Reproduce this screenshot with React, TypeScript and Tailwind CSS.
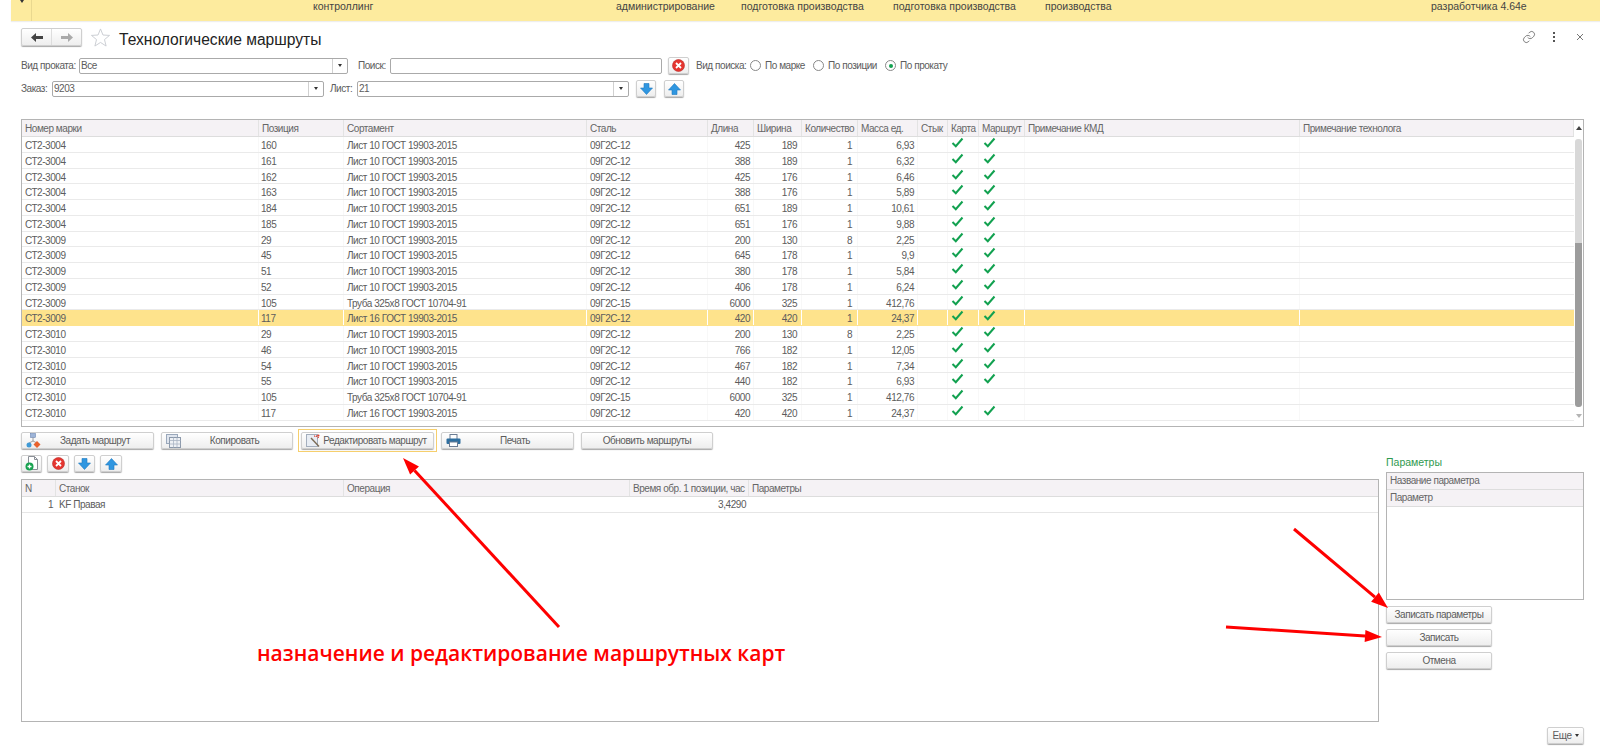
import type { ReactNode } from "react";

type Row = {
  mark: string;
  pos: string;
  item: string;
  steel: string;
  len: string;
  width: string;
  qty: string;
  mass: string;
  route?: boolean;
  selected?: boolean;
};

const SHEET10 = "Лист 10 ГОСТ 19903-2015";
const SHEET16 = "Лист 16 ГОСТ 19903-2015";
const PIPE = "Труба 325x8 ГОСТ 10704-91";

const rows: Row[] = [
  { mark: "СТ2-3004", pos: "160", item: SHEET10, steel: "09Г2С-12", len: "425", width: "189", qty: "1", mass: "6,93", route: true },
  { mark: "СТ2-3004", pos: "161", item: SHEET10, steel: "09Г2С-12", len: "388", width: "189", qty: "1", mass: "6,32", route: true },
  { mark: "СТ2-3004", pos: "162", item: SHEET10, steel: "09Г2С-12", len: "425", width: "176", qty: "1", mass: "6,46", route: true },
  { mark: "СТ2-3004", pos: "163", item: SHEET10, steel: "09Г2С-12", len: "388", width: "176", qty: "1", mass: "5,89", route: true },
  { mark: "СТ2-3004", pos: "184", item: SHEET10, steel: "09Г2С-12", len: "651", width: "189", qty: "1", mass: "10,61", route: true },
  { mark: "СТ2-3004", pos: "185", item: SHEET10, steel: "09Г2С-12", len: "651", width: "176", qty: "1", mass: "9,88", route: true },
  { mark: "СТ2-3009", pos: "29", item: SHEET10, steel: "09Г2С-12", len: "200", width: "130", qty: "8", mass: "2,25", route: true },
  { mark: "СТ2-3009", pos: "45", item: SHEET10, steel: "09Г2С-12", len: "645", width: "178", qty: "1", mass: "9,9", route: true },
  { mark: "СТ2-3009", pos: "51", item: SHEET10, steel: "09Г2С-12", len: "380", width: "178", qty: "1", mass: "5,84", route: true },
  { mark: "СТ2-3009", pos: "52", item: SHEET10, steel: "09Г2С-12", len: "406", width: "178", qty: "1", mass: "6,24", route: true },
  { mark: "СТ2-3009", pos: "105", item: PIPE, steel: "09Г2С-15", len: "6000", width: "325", qty: "1", mass: "412,76", route: true },
  { mark: "СТ2-3009", pos: "117", item: SHEET16, steel: "09Г2С-12", len: "420", width: "420", qty: "1", mass: "24,37", route: true, selected: true },
  { mark: "СТ2-3010", pos: "29", item: SHEET10, steel: "09Г2С-12", len: "200", width: "130", qty: "8", mass: "2,25", route: true },
  { mark: "СТ2-3010", pos: "46", item: SHEET10, steel: "09Г2С-12", len: "766", width: "182", qty: "1", mass: "12,05", route: true },
  { mark: "СТ2-3010", pos: "54", item: SHEET10, steel: "09Г2С-12", len: "467", width: "182", qty: "1", mass: "7,34", route: true },
  { mark: "СТ2-3010", pos: "55", item: SHEET10, steel: "09Г2С-12", len: "440", width: "182", qty: "1", mass: "6,93", route: true },
  { mark: "СТ2-3010", pos: "105", item: PIPE, steel: "09Г2С-15", len: "6000", width: "325", qty: "1", mass: "412,76" },
  { mark: "СТ2-3010", pos: "117", item: SHEET16, steel: "09Г2С-12", len: "420", width: "420", qty: "1", mass: "24,37", route: true },
];

const GRID = "grid grid-cols-[237px_85px_243px_121px_46px_48px_56px_60px_30px_31px_46px_275px_274px]";
const HEADERS = ["Номер марки", "Позиция", "Сортамент", "Сталь", "Длина", "Ширина", "Количество", "Масса ед.", "Стык", "Карта", "Маршрут", "Примечание КМД", "Примечание технолога"];
const BTN = "bg-gradient-to-b from-white to-[#eeeeee] border border-[#cfcfcf] rounded-[2px] shadow-[0_1px_1px_#a8a8a8]";

function Check() {
  return (
    <svg width="13" height="11" viewBox="0 0 13 11" className="block">
      <path d="M1.5 6 L4.8 9.2 L11.5 1.5" fill="none" stroke="#12a150" strokeWidth="2" />
    </svg>
  );
}

function TableRow({ r }: { r: Row }) {
  const cell = r.selected ? "border-r border-white" : "border-r border-[#f8f8f8]";
  return (
    <div className={`${GRID} grid-rows-[14.75px] h-[15.75px] leading-[18px] border-b ${r.selected ? "bg-[#fee38c] border-[#fee38c]" : "border-[#eaeaea]"}`}>
      <div className={`pl-[3px] ${cell}`}>{r.mark}</div>
      <div className={`pl-[2px] ${cell}`}>{r.pos}</div>
      <div className={`pl-[3px] ${cell}`}>{r.item}</div>
      <div className={`pl-[3px] ${cell}`}>{r.steel}</div>
      <div className={`pr-[3px] text-right ${cell}`}>{r.len}</div>
      <div className={`pr-[4px] text-right ${cell}`}>{r.width}</div>
      <div className={`pr-[5px] text-right ${cell}`}>{r.qty}</div>
      <div className={`pr-[3px] text-right ${cell}`}>{r.mass}</div>
      <div className={cell} />
      <div className={`pl-[3px] ${cell}`}><Check /></div>
      <div className={`pl-[4px] ${cell}`}>{r.route && <Check />}</div>
      <div className={cell} />
      <div />
    </div>
  );
}

function HeaderCell({ children, className = "" }: { children?: ReactNode; className?: string }) {
  return <div className={`pl-[3px] border-r border-[#e3e3e3] whitespace-nowrap overflow-hidden ${className}`}>{children}</div>;
}

function ArrowBlue({ up }: { up?: boolean }) {
  return (
    <svg width="13" height="12" viewBox="0 0 13 12" className={up ? "rotate-180" : ""}>
      <path d="M4 .5 H9 V5 H12.5 L6.5 11.5 L.5 5 H4 Z" fill="#2f96e0" stroke="#1f78c0" strokeWidth=".6" />
    </svg>
  );
}

function Clear() {
  return (
    <svg width="13" height="13" viewBox="0 0 13 13">
      <circle cx="6.5" cy="6.5" r="6" fill="#e5352f" stroke="#b82a26" strokeWidth=".6" />
      <path d="M4 4 L9 9 M9 4 L4 9" stroke="#fff" strokeWidth="1.8" />
    </svg>
  );
}

function IconButton({ children, className = "" }: { children: ReactNode; className?: string }) {
  return <div className={`${BTN} flex items-center justify-center h-[17px] ${className}`}>{children}</div>;
}

function Combo({ value, className }: { value: string; className: string }) {
  return (
    <div className={`flex h-[16px] border border-[#aaaaaa] rounded-[2px] bg-white leading-[14px] ${className}`}>
      <div className="flex-1 pl-[1px]">{value}</div>
      <div className="w-[15px] border-l border-[#d0d0d0] flex items-center justify-center">
        <div className="w-0 h-0 border-l-[2px] border-r-[2px] border-t-[3px] border-l-transparent border-r-transparent border-t-[#333]" />
      </div>
    </div>
  );
}

function Radio({ label, on, className = "" }: { label: string; on?: boolean; className?: string }) {
  return (
    <div className={`flex items-center gap-[4px] whitespace-nowrap ${className}`}>
      <div className="w-[11px] h-[11px] rounded-full border border-[#888] bg-white flex items-center justify-center">
        {on && <div className="w-[4px] h-[4px] rounded-full bg-[#12a150]" />}
      </div>
      <span>{label}</span>
    </div>
  );
}

function ActionButton({ icon, label, className = "" }: { icon?: ReactNode; label: string; className?: string }) {
  return (
    <div className={`${BTN} flex items-center h-[17px] pl-[4px] whitespace-nowrap ${className}`}>
      {icon}
      <span className="flex-1 text-center pr-[4px]">{label}</span>
    </div>
  );
}

function RouteIcon() {
  return (
    <svg width="15" height="15" viewBox="0 0 15 15">
      <rect x="4.5" y="0.5" width="5" height="4" fill="#9db4d8" stroke="#5a78a8" strokeWidth=".5" />
      <path d="M7 4.5 V8 M3 10 L7 8 L11 10" stroke="#888" strokeWidth=".8" fill="none" />
      <circle cx="3" cy="12" r="2.5" fill="#3f9ad6" />
      <path d="M11 8 L14.5 11.5 L11 15 L7.5 11.5 Z" fill="#e8622c" />
    </svg>
  );
}

function CopyIcon() {
  return (
    <svg width="15" height="14" viewBox="0 0 15 14">
      <rect x="0.5" y="0.5" width="11" height="9" fill="#dfe5ee" stroke="#9aa8bb" />
      <rect x="3.5" y="3.5" width="11" height="10" fill="#eef1f5" stroke="#8c99ab" />
      <path d="M3.5 6.5 H14.5 M3.5 10 H14.5 M7.5 3.5 V13.5 M11 3.5 V13.5" stroke="#a9b5c4" strokeWidth=".8" />
    </svg>
  );
}

function EditIcon() {
  return (
    <svg width="15" height="14" viewBox="0 0 15 14">
      <rect x="0.5" y="0.5" width="11" height="12" fill="#e8edf4" stroke="#a3aebd" />
      <path d="M5 4 L13 12.5" stroke="#7a6a55" strokeWidth="1.4" />
      <path d="M11 1 L10.5 3 M13 3 L11.5 4 M8.5 1.5 L9 3" stroke="#e03a2a" strokeWidth="1" />
      <circle cx="12.5" cy="1.5" r="1" fill="#e03a2a" />
    </svg>
  );
}

function PrintIcon() {
  return (
    <svg width="15" height="13" viewBox="0 0 15 13">
      <rect x="4" y="0.5" width="7" height="5" fill="#fff" stroke="#6b7c93" />
      <rect x="0.5" y="4.5" width="14" height="5.5" rx="1" fill="#2f6f9f" />
      <rect x="3.5" y="8" width="8" height="4.5" fill="#fff" stroke="#6b7c93" />
    </svg>
  );
}

function AddDocIcon() {
  return (
    <svg width="14" height="15" viewBox="0 0 14 15">
      <path d="M3.5 .5 H9.5 L12.5 3.5 V13.5 H3.5 Z" fill="#fff" stroke="#8a8f96" />
      <path d="M9.5 .5 V3.5 H12.5" fill="none" stroke="#8a8f96" />
      <circle cx="4.5" cy="10.5" r="4" fill="#17a24f" />
      <path d="M2.5 10.5 H6.5 M4.5 8.5 V12.5" stroke="#fff" strokeWidth="1.3" />
    </svg>
  );
}

function RedArrow({ x1, y1, x2, y2 }: { x1: number; y1: number; x2: number; y2: number }) {
  const len = Math.hypot(x2 - x1, y2 - y1);
  const ux = (x2 - x1) / len;
  const uy = (y2 - y1) / len;
  const bx = x2 - ux * 17;
  const by = y2 - uy * 17;
  const points = `${x2},${y2} ${bx - uy * 6},${by + ux * 6} ${bx + uy * 6},${by - ux * 6}`;
  return (
    <g>
      <line x1={x1} y1={y1} x2={bx} y2={by} stroke="#fe0000" strokeWidth="3" />
      <polygon points={points} fill="#fe0000" />
    </g>
  );
}

export default function App() {
  return (
    <div className="relative w-[1600px] h-[749px] overflow-hidden bg-white text-[10px] tracking-[-0.45px] text-[#5c5c5c] font-['Liberation_Sans',Arial,sans-serif]">
      {/* top section bar */}
      <div className="flex h-[21px] pt-[1px] ml-[11px] bg-[#fdeb9e] text-[10.5px] tracking-normal leading-[11px] text-[#444] shadow-[0_1px_1px_#eeeeee]">
        <div className="relative w-[21px] -mt-[1px] border-r border-[#e9d88f]">
          <div className="absolute left-[9px] top-0 w-0 h-0 border-l-[2px] border-r-[2px] border-t-[3px] border-l-transparent border-r-transparent border-t-[#333]" />
        </div>
        <div className="pl-[281px] w-[584px]">контроллинг</div>
        <div className="w-[125px]">администрирование</div>
        <div className="w-[152px]">подготовка производства</div>
        <div className="w-[152px]">подготовка производства</div>
        <div className="w-[386px]">производства</div>
        <div>разработчика 4.64е</div>
      </div>

      {/* title */}
      <div className="flex items-center h-[18px] mt-[7px] pl-[21px] pr-[16px]">
        <div className={`${BTN} flex w-[61px] h-[18px]`}>
          <div className="flex-1 flex items-center justify-center border-r border-[#dddddd]">
            <svg width="12" height="9" viewBox="0 0 12 9"><path d="M0 4.5 L5 0 V3 H12 V6 H5 V9 Z" fill="#444" /></svg>
          </div>
          <div className="flex-1 flex items-center justify-center">
            <svg width="12" height="9" viewBox="0 0 12 9"><path d="M12 4.5 L7 0 V3 H0 V6 H7 V9 Z" fill="#aaa" /></svg>
          </div>
        </div>
        <svg width="19" height="19" viewBox="0 0 20 20" className="ml-[9px]">
          <path d="M10 1 L12.6 7.4 L19.5 7.8 L14.2 12.2 L15.9 19 L10 15.2 L4.1 19 L5.8 12.2 L.5 7.8 L7.4 7.4 Z" fill="none" stroke="#c9ccd2" strokeWidth="1" />
        </svg>
        <div className="ml-[9px] mt-[5px] text-[15.6px] tracking-normal leading-[18px] text-[#222]">Технологические маршруты</div>
        <div className="ml-auto flex items-center">
          <svg width="14" height="14" viewBox="0 0 24 24" fill="none" stroke="#777" strokeWidth="1.6" strokeLinecap="round" strokeLinejoin="round">
            <path d="M10 13a5 5 0 0 0 7.5.5l3-3a5 5 0 0 0-7-7l-1.7 1.7" />
            <path d="M14 11a5 5 0 0 0-7.5-.5l-3 3a5 5 0 0 0 7 7l1.7-1.7" />
          </svg>
          <div className="ml-[17px] flex flex-col gap-[2px]">
            <div className="w-[2px] h-[2px] bg-[#555]" />
            <div className="w-[2px] h-[2px] bg-[#555]" />
            <div className="w-[2px] h-[2px] bg-[#555]" />
          </div>
          <svg width="8" height="8" viewBox="0 0 8 8" className="ml-[21px]"><path d="M1 1 L7 7 M7 1 L1 7" stroke="#777" strokeWidth="1" /></svg>
        </div>
      </div>

      {/* filters */}
      <div className="flex items-center h-[17px] mt-[11px] pl-[21px] whitespace-nowrap">
        <span className="w-[58px]">Вид проката:</span>
        <Combo value="Все" className="w-[269px]" />
        <span className="ml-[10px] w-[32px]">Поиск:</span>
        <div className="w-[272px] h-[16px] border border-[#aaaaaa] rounded-[2px] bg-white" />
        <IconButton className="ml-[6px] w-[21px]"><Clear /></IconButton>
        <span className="ml-[7px] w-[54px]">Вид поиска:</span>
        <Radio label="По марке" className="w-[63px]" />
        <Radio label="По позиции" className="w-[72px]" />
        <Radio label="По прокату" on />
      </div>
      <div className="flex items-center h-[17px] mt-[6px] pl-[21px] whitespace-nowrap">
        <span className="w-[31px]">Заказ:</span>
        <Combo value="9203" className="w-[272px]" />
        <span className="ml-[6px] w-[27px]">Лист:</span>
        <Combo value="21" className="w-[272px]" />
        <IconButton className="ml-[7px] w-[20px]"><ArrowBlue /></IconButton>
        <IconButton className="ml-[8px] w-[20px]"><ArrowBlue up /></IconButton>
      </div>

      {/* main table */}
      <div className="flex ml-[21px] mt-[22px] w-[1563px] h-[308px] border border-[#b4b4b4]">
        <div className="w-[1552px]">
          <div className={`${GRID} h-[17px] leading-[17px] bg-[#f5f2f5] border-b border-[#dddddd] text-[#666]`}>
            {HEADERS.map((h) => (
              <HeaderCell key={h}>{h}</HeaderCell>
            ))}
          </div>
          {rows.map((r) => (
            <TableRow key={r.mark + r.pos} r={r} />
          ))}
        </div>
        <div className="flex-1 flex flex-col items-center pt-[6px]">
          <div className="w-0 h-0 border-l-[3px] border-r-[3px] border-b-[4px] border-l-transparent border-r-transparent border-b-[#444]" />
          <div className="w-[7px] h-[104px] mt-[9px] bg-[#d8d8d8] rounded-t-[3px]" />
          <div className="w-[7px] h-[164px] bg-[#9c9c9c] rounded-b-[3px]" />
          <div className="mt-[7px] w-0 h-0 border-l-[3px] border-r-[3px] border-t-[4px] border-l-transparent border-r-transparent border-t-[#b4b4b4]" />
        </div>
      </div>

      {/* route actions */}
      <div className="flex items-center h-[17px] mt-[5px] ml-[21px]">
        <ActionButton icon={<RouteIcon />} label="Задать маршрут" className="w-[133px]" />
        <ActionButton icon={<CopyIcon />} label="Копировать" className="ml-[7px] w-[132px]" />
        <div className="ml-[5px] p-[2px] border border-[#f6cf6d]">
          <ActionButton icon={<EditIcon />} label="Редактировать маршрут" className="w-[133px]" />
        </div>
        <ActionButton icon={<PrintIcon />} label="Печать" className="ml-[4px] w-[133px]" />
        <ActionButton label="Обновить маршруты" className="ml-[7px] w-[132px]" />
      </div>

      {/* lower area */}
      <div className="flex mt-[6px] ml-[21px]">
        <div className="w-[1358px]">
          <div className="flex gap-[5px] h-[17px]">
            <IconButton className="w-[21px]"><AddDocIcon /></IconButton>
            <IconButton className="w-[22px]"><Clear /></IconButton>
            <IconButton className="w-[21px]"><ArrowBlue /></IconButton>
            <IconButton className="w-[22px]"><ArrowBlue up /></IconButton>
          </div>
          <div className="mt-[7px] h-[243px] border border-[#b4b4b4]">
            <div className="grid grid-cols-[34px_288px_286px_119px_1fr] h-[17px] leading-[17px] bg-[#f5f2f5] border-b border-[#dddddd] text-[#666]">
              <HeaderCell>N</HeaderCell>
              <HeaderCell>Станок</HeaderCell>
              <HeaderCell>Операция</HeaderCell>
              <HeaderCell>Время обр. 1 позиции, час</HeaderCell>
              <HeaderCell className="border-r-0">Параметры</HeaderCell>
            </div>
            <div className="grid grid-cols-[34px_288px_286px_119px_1fr] h-[16px] leading-[16px] border-b border-[#e6e6e6]">
              <div className="pr-[3px] text-right">1</div>
              <div className="pl-[3px]">KF Правая</div>
              <div />
              <div className="pr-[3px] text-right">3,4290</div>
              <div />
            </div>
          </div>
        </div>

        <div className="ml-[7px] w-[198px]">
          <div className="h-[17px] leading-[14px] text-[10.5px] tracking-normal text-[#2f9a4f]">Параметры</div>
          <div className="h-[128px] border border-[#b4b4b4]">
            <div className="h-[17px] leading-[16px] pl-[3px] bg-[#f5f2f5] border-b border-[#dddddd] text-[#666]">Название параметра</div>
            <div className="h-[17px] leading-[16px] pl-[3px] bg-[#f5f2f5] border-b border-[#dddddd] text-[#666]">Параметр</div>
          </div>
          <div className="mt-[6px] flex flex-col gap-[6px] w-[106px]">
            <div className={`${BTN} h-[17px] leading-[15px] text-center`}>Записать параметры</div>
            <div className={`${BTN} h-[17px] leading-[15px] text-center`}>Записать</div>
            <div className={`${BTN} h-[17px] leading-[15px] text-center`}>Отмена</div>
          </div>
          <div className={`${BTN} mt-[58px] ml-auto w-[37px] h-[17px] flex items-center justify-center gap-[3px]`}>
            <span>Еще</span>
            <div className="w-0 h-0 border-l-[2px] border-r-[2px] border-t-[3px] border-l-transparent border-r-transparent border-t-[#333]" />
          </div>
        </div>
      </div>

      {/* annotation drawn over the form */}
      <svg className="absolute inset-0 pointer-events-none" width="1600" height="749">
        <RedArrow x1={559} y1={627} x2={403} y2={458} />
        <RedArrow x1={1294} y1={529} x2={1388} y2={608} />
        <RedArrow x1={1226} y1={627} x2={1382} y2={637} />
      </svg>
      <div className="absolute left-[257px] top-[639px] text-[21px] tracking-normal leading-[28px] font-semibold text-[#fe0000] whitespace-nowrap font-['Open_Sans',sans-serif]">
        назначение и редактирование маршрутных карт
      </div>
    </div>
  );
}
